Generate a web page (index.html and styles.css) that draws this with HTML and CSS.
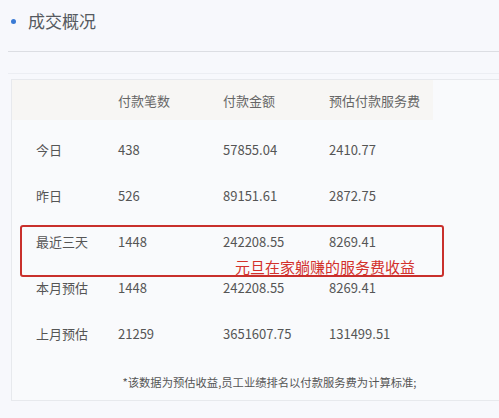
FILE: index.html
```html
<!DOCTYPE html>
<html lang="zh-CN">
<head>
<meta charset="utf-8">
<link rel="stylesheet" href="styles.css">
</head>
<body>
<div class="page">
  <div class="title"><span class="dot"></span><span class="title-text">成交概况</span></div>
  <div class="rule"></div>
  <div class="rule-faint"></div>
  <div class="card">
    <div class="table">
      <div class="row head">
        <span class="c1"></span><span class="c2">付款笔数</span><span class="c3">付款金额</span><span class="c4">预估付款服务费</span>
      </div>
      <div class="body">
        <div class="row"><span class="c1">今日</span><span class="c2">438</span><span class="c3">57855.04</span><span class="c4">2410.77</span></div>
        <div class="row"><span class="c1">昨日</span><span class="c2">526</span><span class="c3">89151.61</span><span class="c4">2872.75</span></div>
        <div class="row"><span class="c1">最近三天</span><span class="c2">1448</span><span class="c3">242208.55</span><span class="c4">8269.41</span></div>
        <div class="row"><span class="c1">本月预估</span><span class="c2">1448</span><span class="c3">242208.55</span><span class="c4">8269.41</span></div>
        <div class="row"><span class="c1">上月预估</span><span class="c2">21259</span><span class="c3">3651607.75</span><span class="c4">131499.51</span></div>
      </div>
    </div>
    <p class="note">*该数据为预估收益,员工业绩排名以付款服务费为计算标准;</p>
    <div class="annot"><span class="annot-text">元旦在家躺赚的服务费收益</span></div>
  </div>
</div>
</body>
</html>
```
FILE: styles.css
```css
html, body {
  margin: 0;
  padding: 0;
  background: #f7f8fc;
  overflow: hidden;
}
body {
  font-family: "Microsoft YaHei", "Noto Sans CJK SC", "Noto Sans", sans-serif;
  color: #555;
  width: 499px;
  height: 418px;
}
.page {
  padding-top: 9px;
}
.title {
  display: flex;
  align-items: center;
  height: 24px;
  padding-left: 11px;
}
.dot {
  width: 5px;
  height: 5px;
  border-radius: 50%;
  background: #3a7bd5;
  margin-right: 12px;
  margin-top: 1px;
}
.title-text {
  font-size: 17px;
  color: #555a60;
  line-height: 24px;
}
.rule {
  margin: 18px 0 0 8px;
  border-top: 1px solid #dcdee3;
}
.rule-faint {
  margin: 21px 0 0 8px;
  border-top: 1px solid #eceef3;
}
.card {
  position: relative;
  margin: 5px 0 0 11px;
  border: 1px solid #e7e9ed;
  border-right: none;
  background: #f9fafc;
  height: 322px;
  box-sizing: border-box;
}
.table {
  width: 421px;
}
.row {
  display: flex;
  align-items: center;
  height: 46px;
  font-size: 13px;
  color: #555;
}
.row.head {
  height: 40px;
  background: #f7f6f4;
  color: #666;
  margin-bottom: 6px;
}
.c1 { width: 82px; padding-left: 24px; }
.c2 { width: 105px; }
.c3 { width: 106px; }
.c4 { width: 104px; }
.note {
  margin: 18px 0 0 0;
  text-align: center;
  font-size: 11.3px;
  color: #555;
  padding-left: 28px;
}
.annot {
  position: absolute;
  left: 8px;
  top: 145px;
  width: 424px;
  height: 52px;
  box-sizing: border-box;
  border: 2px solid #c9302c;
  border-radius: 3px;
}
.annot-text {
  position: absolute;
  left: 213px;
  top: 30px;
  line-height: 20px;
  font-size: 15px;
  color: #d3302b;
  white-space: nowrap;
}
```
